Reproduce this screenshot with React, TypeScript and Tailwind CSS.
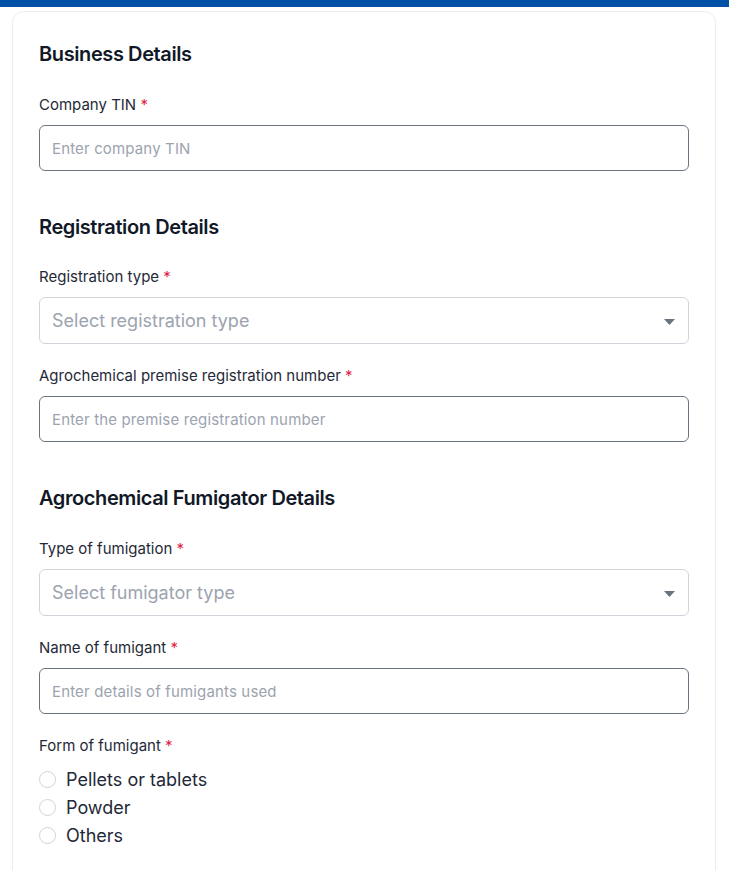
import React from 'react';

function Label({ text }: { text: string }) {
  return (
    <label className="block text-[15px] leading-5 text-[#1f2937]">
      {text} <span className="text-[#e11d48]">*</span>
    </label>
  );
}

function TextField({ label, placeholder }: { label: string; placeholder: string }) {
  return (
    <div>
      <Label text={label} />
      <input
        type="text"
        placeholder={placeholder}
        className="mt-[10px] block w-full h-[46px] rounded-md border border-[#6b7280] bg-white px-3 text-[15px] tracking-[0.01em] text-[#111827] placeholder:text-[#9ca3af] outline-none"
      />
    </div>
  );
}

function SelectField({ label, placeholder }: { label: string; placeholder: string }) {
  return (
    <div>
      <Label text={label} />
      <div className="mt-[10px] flex h-[47px] w-full items-center justify-between rounded-md border border-[#d1d5db] bg-white pl-3 pr-[13px]">
        <span className="text-[18px] text-[#9ca3af]">{placeholder}</span>
        <svg width="11" height="6" viewBox="0 0 11 6" className="mt-[3px]">
          <path d="M0 0h11L5.5 6z" fill="#6b7280" />
        </svg>
      </div>
    </div>
  );
}

function Heading({ children }: { children: React.ReactNode }) {
  return <h2 className="text-[20px] leading-7 font-semibold text-[#111827] tracking-[-0.02em]">{children}</h2>;
}

export default function App() {
  const forms = ['Pellets or tablets', 'Powder', 'Others'];

  return (
    <div className="min-h-screen bg-white" style={{ fontFamily: 'Inter, "Noto Sans", sans-serif' }}>
      <div className="h-[7px] bg-[#0050a8]" />
      <div className="pl-3 pr-[13px] pt-1">
        <div className="rounded-xl border border-[#ececec] bg-white px-[26px] pt-[28px] pb-10">
          <Heading>Business Details</Heading>
          <div className="mt-[27px]">
            <TextField label="Company TIN" placeholder="Enter company TIN" />
          </div>

          <div className="mt-[42px]">
            <Heading>Registration Details</Heading>
          </div>
          <div className="mt-[26px] flex flex-col gap-[22px]">
            <SelectField label="Registration type" placeholder="Select registration type" />
            <TextField label="Agrochemical premise registration number" placeholder="Enter the premise registration number" />
          </div>

          <div className="mt-[42px]">
            <Heading>Agrochemical Fumigator Details</Heading>
          </div>
          <div className="mt-[27px] flex flex-col gap-[22px]">
            <SelectField label="Type of fumigation" placeholder="Select fumigator type" />
            <TextField label="Name of fumigant" placeholder="Enter details of fumigants used" />
            <div>
              <Label text="Form of fumigant" />
              <div className="mt-[9px] flex flex-col">
                {forms.map((f) => (
                  <label key={f} className="flex h-7 items-center gap-[10px]">
                    <span className="h-[17px] w-[17px] rounded-full border border-[#cfd3d8] bg-white" />
                    <span className="text-[18px] text-[#1f2937]">{f}</span>
                  </label>
                ))}
              </div>
            </div>
          </div>
        </div>
      </div>
    </div>
  );
}
